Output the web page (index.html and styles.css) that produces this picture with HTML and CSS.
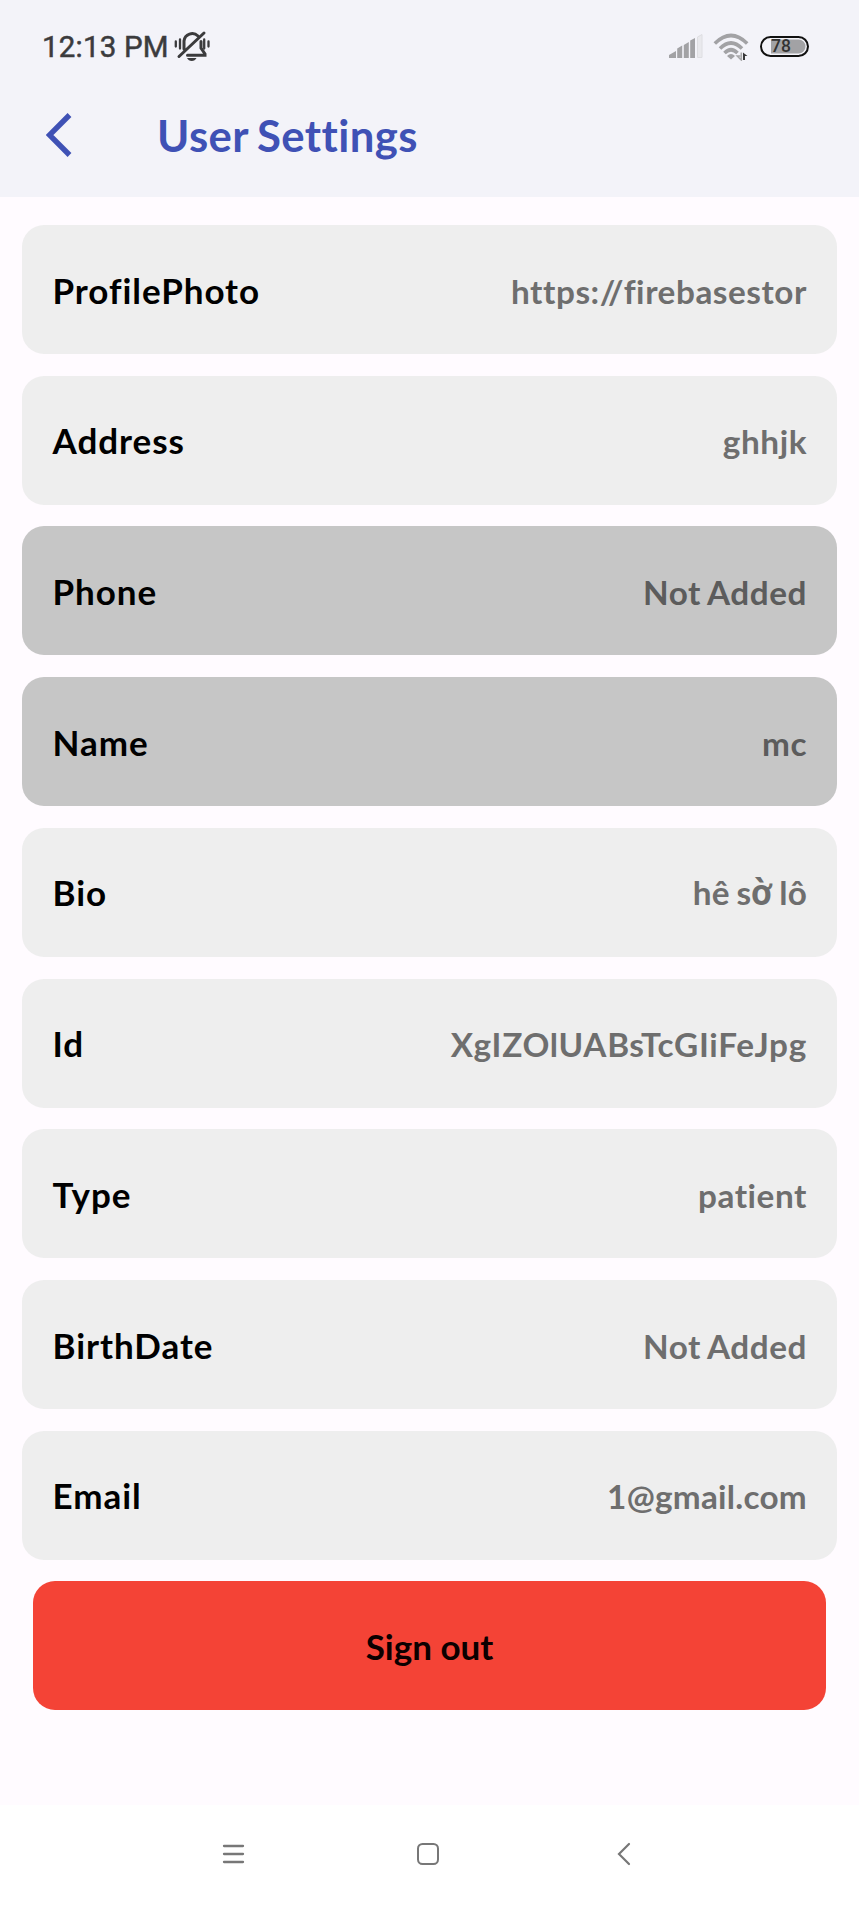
FILE: index.html
```html
<!DOCTYPE html>
<html lang="en">
<head>
<meta charset="utf-8">
<title>User Settings</title>
<link rel="stylesheet" href="styles.css">
</head>
<body>
<div class="screen">
  <header class="header">
    <div class="status-bar">
      <span class="clock">12:13 PM</span>
      <svg class="bell" width="38" height="34" viewBox="0 0 38 34" fill="none" stroke="#3b3b3d" stroke-width="3">
        <path d="M11 20V12a8.3 8.3 0 0 1 14-5M28 12.5V19l4 6v1.2H14.500M6 27.500L31 4" stroke-linecap="round"/>
        <path d="M2.800 12.500v5M7 10.500v9M31.200 10.500v9M35.500 12.500v5" stroke-width="2.300" stroke-linecap="round"/>
        <path d="M14 29h9.500q-1.500 3-4.750 3T14 29z" fill="#3b3b3d" stroke="none"/>
      </svg>
      <div class="status-icons">
        <svg width="36" height="26" viewBox="0 0 36 26" fill="#a2a2a5">
          <path d="M1 25v-3l7-4v7zM9.200 25V15.500l5-3V25zM15.800 25V12l5-3v16zM22.200 25V7.500L27 5v20z"/>
          <path d="M29.500 24.500V4l4.500-2.500v23z" fill="#e9e9ed" stroke="#dedee2"/>
        </svg>
        <svg class="wifi" width="37" height="28" viewBox="0 0 37 28" fill="none" stroke="#a2a2a5" stroke-width="3.600">
          <path d="M1.800 10.500Q18 -5.500 34.200 10.500M7 15.500Q18 4.500 29 15.500M11.500 20Q18 13.500 24.500 20"/>
          <path d="M14 23q4-4 8 0l-4 3.500z" fill="#a2a2a5" stroke="none"/>
          <path d="M28.300 19.500v7.500l-4-4h3" stroke="#a8a8aa" stroke-width="1.600"/>
          <path d="M30 27v-7.500l4.500 3.500h-2.500v4z" fill="#38383a" stroke="none"/>
        </svg>
        <div class="battery"><span class="battery-level">78</span></div>
      </div>
    </div>
    <div class="app-bar">
      <svg class="back" width="28" height="44" viewBox="0 0 28 44" fill="none" stroke="#3f51b5" stroke-width="5.400">
        <path d="M23.500 2L3.500 22l20 20"/>
      </svg>
      <h1 class="title">User Settings</h1>
    </div>
  </header>
  <main class="settings">
    <div class="row"><span class="label">ProfilePhoto</span><span class="value">https://firebasestor</span></div>
    <div class="row"><span class="label">Address</span><span class="value">ghhjk</span></div>
    <div class="row row-locked"><span class="label">Phone</span><span class="value">Not Added</span></div>
    <div class="row row-locked"><span class="label">Name</span><span class="value">mc</span></div>
    <div class="row"><span class="label">Bio</span><span class="value value-bio">hê s<span class="fallback">ờ</span> lô</span></div>
    <div class="row"><span class="label">Id</span><span class="value value-id">XgIZOlUABsTcGIiFeJpg</span></div>
    <div class="row"><span class="label">Type</span><span class="value">patient</span></div>
    <div class="row"><span class="label">BirthDate</span><span class="value">Not Added</span></div>
    <div class="row"><span class="label">Email</span><span class="value value-email">1@gmail.com</span></div>
    <button class="sign-out">Sign out</button>
  </main>
  <nav class="nav-bar">
    <svg width="24" height="24" viewBox="0 0 24 24" fill="none" stroke="#777" stroke-width="2.300" stroke-linecap="round"><path d="M3 4h19M3 12h19M3 20h19"/></svg>
    <svg width="24" height="24" viewBox="0 0 24 24" fill="none" stroke="#777" stroke-width="2"><rect x="1" y="2" width="20" height="20" rx="4.500"/></svg>
    <svg width="24" height="24" viewBox="0 0 24 24" fill="none" stroke="#777" stroke-width="2.200" stroke-linecap="round"><path d="M17 2L7 12l10 10"/></svg>
  </nav>
</div>
</body>
</html>
```
FILE: styles.css
```css
* { box-sizing: border-box; }
body { margin: 0; background: #fffbff; font-family: Lato, sans-serif; font-variant-ligatures: none; }
.screen { width: 859px; height: 1908px; display: flex; flex-direction: column; }
.header { height: 196.500px; background: #f3f3f9; }
.status-bar { height: 92px; padding: 0 50px 0 42px; display: flex; align-items: center; }
.clock { font: 400 29.500px/34px Roboto, sans-serif; color: #3b3b3d; -webkit-text-stroke: 0.500px #3b3b3d; letter-spacing: 0.200px; padding-top: 2px; }
.bell { margin-left: 4px; }
.status-icons { margin-left: auto; display: flex; align-items: center; gap: 9px; }
.wifi { margin-top: 2px; }
.battery { width: 49px; height: 21px; margin-left: 1px; border: 2.500px solid #111; border-radius: 11px; background: linear-gradient(to right, transparent 9px, #a2a2a5 9px) padding-box; padding: 0 9px; box-shadow: inset 0 0 0 1.500px #f3f3f9; }
.battery-level { display: block; font: 500 17.500px/17px Roboto, sans-serif; color: #333; }
.app-bar { display: flex; align-items: center; height: 86px; padding-left: 46px; }
.back { flex: none; }
.title { margin: 0 0 0 83px; font-size: 43.700px; line-height: 54px; font-weight: 700; color: #3f51b5; letter-spacing: 0.400px; word-spacing: -2px; }
.settings { flex: 1; padding: 28.500px 22px 0; display: flex; flex-direction: column; gap: 21.730px; }
.row { height: 129px; flex: none; padding: 0 30px; display: flex; align-items: center; justify-content: space-between; border-radius: 22px; background: #eee; font-weight: 700; }
.row-locked { background: #c6c6c6; }
.label { font-size: 35px; line-height: 44px; color: #000; padding-left: 0.500px; letter-spacing: 0.950px; }
.value { font-size: 33.300px; line-height: 44px; color: #6e6e6e; padding-top: 2px; letter-spacing: 0.550px; word-spacing: -1.500px; }
.value-bio { letter-spacing: 0.200px; word-spacing: -1.500px; padding-top: 0; }
.value-id { letter-spacing: 0.700px; }
.value-email { letter-spacing: 0.250px; }
.row-locked .value { color: #5c5c5c; }
.fallback { font-family: Roboto, sans-serif; font-size: 36px; line-height: 40px; }
.sign-out { height: 129px; flex: none; margin: 0 11px; padding: 0; border: 0; border-radius: 22px; background: #f44336; font: 700 35px/44px Lato, sans-serif; color: #0c0000; }
.nav-bar { height: 103px; background: #fff; display: flex; align-items: center; justify-content: space-between; padding: 0 223px 6px 221px; }
```
